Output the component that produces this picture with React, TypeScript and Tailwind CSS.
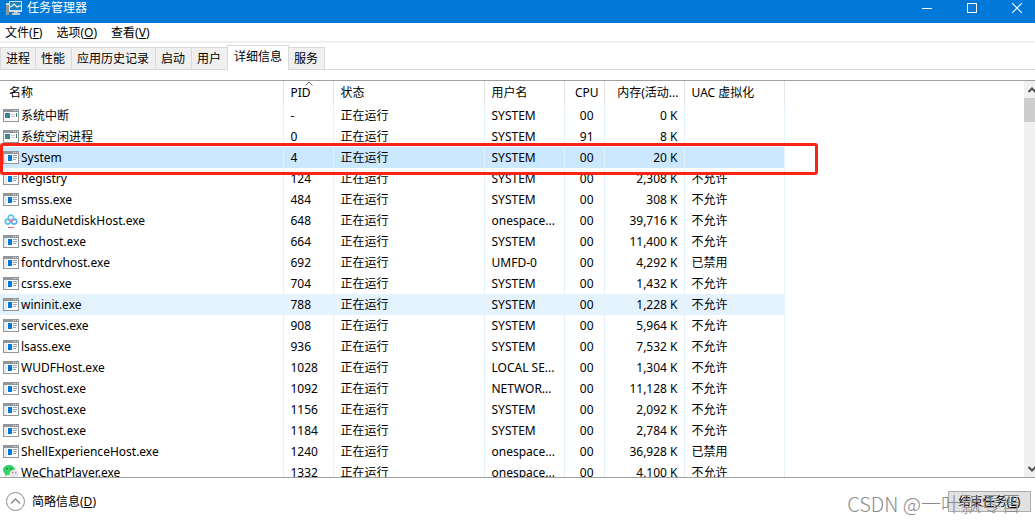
import React, { useState } from 'react';

type IconKind = 'system' | 'exe' | 'baidu' | 'wechat';

interface ProcessRow {
  name: string;
  icon: IconKind;
  pid: string;
  user: string;
  cpu: string;
  memory: string;
  uac: string;
}

const processes: ProcessRow[] = [
  { name: '系统中断', icon: 'system', pid: '-', user: 'SYSTEM', cpu: '00', memory: '0 K', uac: '' },
  { name: '系统空闲进程', icon: 'system', pid: '0', user: 'SYSTEM', cpu: '91', memory: '8 K', uac: '' },
  { name: 'System', icon: 'exe', pid: '4', user: 'SYSTEM', cpu: '00', memory: '20 K', uac: '' },
  { name: 'Registry', icon: 'exe', pid: '124', user: 'SYSTEM', cpu: '00', memory: '2,308 K', uac: '不允许' },
  { name: 'smss.exe', icon: 'exe', pid: '484', user: 'SYSTEM', cpu: '00', memory: '308 K', uac: '不允许' },
  { name: 'BaiduNetdiskHost.exe', icon: 'baidu', pid: '648', user: 'onespace...', cpu: '00', memory: '39,716 K', uac: '不允许' },
  { name: 'svchost.exe', icon: 'exe', pid: '664', user: 'SYSTEM', cpu: '00', memory: '11,400 K', uac: '不允许' },
  { name: 'fontdrvhost.exe', icon: 'exe', pid: '692', user: 'UMFD-0', cpu: '00', memory: '4,292 K', uac: '已禁用' },
  { name: 'csrss.exe', icon: 'exe', pid: '704', user: 'SYSTEM', cpu: '00', memory: '1,432 K', uac: '不允许' },
  { name: 'wininit.exe', icon: 'exe', pid: '788', user: 'SYSTEM', cpu: '00', memory: '1,228 K', uac: '不允许' },
  { name: 'services.exe', icon: 'exe', pid: '908', user: 'SYSTEM', cpu: '00', memory: '5,964 K', uac: '不允许' },
  { name: 'lsass.exe', icon: 'exe', pid: '936', user: 'SYSTEM', cpu: '00', memory: '7,532 K', uac: '不允许' },
  { name: 'WUDFHost.exe', icon: 'exe', pid: '1028', user: 'LOCAL SE...', cpu: '00', memory: '1,304 K', uac: '不允许' },
  { name: 'svchost.exe', icon: 'exe', pid: '1092', user: 'NETWOR...', cpu: '00', memory: '11,128 K', uac: '不允许' },
  { name: 'svchost.exe', icon: 'exe', pid: '1156', user: 'SYSTEM', cpu: '00', memory: '2,092 K', uac: '不允许' },
  { name: 'svchost.exe', icon: 'exe', pid: '1184', user: 'SYSTEM', cpu: '00', memory: '2,784 K', uac: '不允许' },
  { name: 'ShellExperienceHost.exe', icon: 'exe', pid: '1240', user: 'onespace...', cpu: '00', memory: '36,928 K', uac: '已禁用' },
  { name: 'WeChatPlayer.exe', icon: 'wechat', pid: '1332', user: 'onespace...', cpu: '00', memory: '4,100 K', uac: '不允许' },
];

const menus = [
  { label: '文件', hotkey: 'F' },
  { label: '选项', hotkey: 'O' },
  { label: '查看', hotkey: 'V' },
];

const tabs = ['进程', '性能', '应用历史记录', '启动', '用户', '详细信息', '服务'];

const ProcessIcon: React.FC<{ kind: IconKind }> = ({ kind }) => {
  if (kind === 'baidu') {
    return (
      <svg width="16" height="16" viewBox="0 0 16 16" fill="none" className="shrink-0">
        <circle cx="8" cy="4.800" r="2.700" stroke="#5cc4f8" strokeWidth="1.600" />
        <circle cx="4.800" cy="8.600" r="2.500" stroke="#45c6f8" strokeWidth="1.600" />
        <circle cx="11.200" cy="8.600" r="2.500" stroke="#58a9f8" strokeWidth="1.600" />
        <path d="M5.800 6.600 8 8.400l2.200-1.800" stroke="#f2788c" strokeWidth="1.600" />
        <path d="M5 14.500h6" stroke="#ee6576" strokeWidth="1" />
      </svg>
    );
  }
  if (kind === 'wechat') {
    return (
      <svg width="16" height="16" viewBox="0 0 16 16" className="shrink-0">
        <path d="M6 0C2.600 0 0 2.200 0 5c0 1.700.9 3.100 2.300 4L2 11.500l2.400-1.400c.5.1 1 .2 1.600.2 3.300 0 6-2.300 6-5.200S9.300 0 6 0z" fill="#35d267" />
        <circle cx="4" cy="3.600" r=".8" fill="#187a38" />
        <circle cx="8" cy="3.600" r=".8" fill="#187a38" />
        <path d="M11.200 4.800c-2.700 0-4.800 1.800-4.800 4s2.100 4 4.800 4c.5 0 1-.1 1.400-.2l1.900 1-.4-1.700c1.200-.7 1.900-1.800 1.900-3.100 0-2.200-2.100-4-4.800-4z" fill="#e6e6e6" />
        <circle cx="9.700" cy="7.800" r=".7" fill="#888" />
        <circle cx="12.800" cy="7.800" r=".7" fill="#888" />
      </svg>
    );
  }
  return (
    <svg width="16" height="16" viewBox="0 -1 16 16" shapeRendering="crispEdges" className="shrink-0">
      <path d="M0 0h16v13H0z" fill="#90959a" />
      <path d="M1 3h14v9H1z" fill="#fff" />
      <path d="M10 1h1v1h-1zM12 1h1v1h-1zM14 1h1v1h-1z" fill="#dfe2e4" />
      {kind === 'system' ? (
        <>
          <path d="M2 4h5v5H2z" fill="#3b78a8" />
          <path d="M2 7h3v2H2zM4 5h3v2H4z" fill="#3d9270" />
          <path d="M8 5h4v1H8zM8 7h4v1H8z" fill="#c8cdd2" />
          <path d="M13 4h1v4h-1z" fill="#2f8270" />
        </>
      ) : (
        <>
          <path d="M1 3h3v9H1z" fill="#e9ebed" />
          <path d="M5 4h4v6H5z" fill="#0078d7" />
          <path d="M10 4h4v1h-4zM10 6h4v1h-4zM10 8h3v1h-3z" fill="#9aa0a6" />
        </>
      )}
    </svg>
  );
};

const TitleBar: React.FC = () => (
  <header className="flex h-[23px] shrink-0 items-start overflow-hidden bg-[#0078d7] pl-[6px] text-white">
    <svg width="16" height="16" viewBox="0 0 16 16" className="shrink-0">
      <path d="M0 3h3v12H0z" fill="#8f989f" />
      <path d="M0 3h3v2H0z" fill="#d5d9dc" />
      <path d="M3 1h13v11H3z" fill="#d8dde0" />
      <path d="M4 2h11v8H4z" fill="#1683bd" />
      <path d="M4 7l2-1 2-2 3 3 2-1h2" fill="none" stroke="#fff" strokeWidth="1.200" />
      <path d="M8 12h4v1h2v2H6v-2h2z" fill="#c3cace" />
    </svg>
    <h1 className="ml-[5px] flex-1 text-xs leading-4">任务管理器</h1>
    <div className="-mr-1 flex">
      <button aria-label="最小化" className="flex h-[15px] w-[45px] items-center justify-center">
        <svg width="10" height="10" viewBox="0 0 10 10" shapeRendering="crispEdges">
          <path d="M0 5h10v1H0z" fill="#fff" />
        </svg>
      </button>
      <button aria-label="最大化" className="flex h-[15px] w-[45px] items-center justify-center">
        <svg width="10" height="10" viewBox="0 0 10 10" fill="none" stroke="#fff" shapeRendering="crispEdges">
          <path d="M.5.500h9v9h-9z" />
        </svg>
      </button>
      <button aria-label="关闭" className="flex h-[15px] w-[45px] items-center justify-center">
        <svg width="10" height="10" viewBox="0 0 10 10" fill="none" stroke="#fff" strokeWidth="1.200">
          <path d="M0 0l10 10M10 0L0 10" />
        </svg>
      </button>
    </div>
  </header>
);

const ScrollBar: React.FC = () => (
  <div className="flex w-[11px] shrink-0 flex-col overflow-hidden bg-[#f0f0f0]">
    <button aria-label="向上滚动" className="flex h-[17px] w-[17px] items-center pl-[4px]">
      <svg width="8" height="6" viewBox="0 0 8 6" fill="none" stroke="#505050" strokeWidth="2">
        <path d="M.5 5 4 1.500 7.500 5" />
      </svg>
    </button>
    <div className="h-6 bg-[#cdcdcd]" />
    <button aria-label="向下滚动" className="mt-auto flex h-[17px] w-[17px] items-center pl-[4px]">
      <svg width="8" height="6" viewBox="0 0 8 6" fill="none" stroke="#505050" strokeWidth="2">
        <path d="M.5 1 4 4.500 7.500 1" />
      </svg>
    </button>
  </div>
);

const App: React.FC = () => {
  const [activeTab, setActiveTab] = useState('详细信息');
  const [selectedPid, setSelectedPid] = useState('4');
  const hoveredPid = '788';

  return (
    <div className="relative flex h-screen flex-col overflow-hidden bg-white font-['Noto_Sans','Noto_Sans_CJK_SC',sans-serif] text-xs leading-4 text-black">
      <TitleBar />

      {/* Menu */}
      <nav className="flex h-5 shrink-0 items-center gap-[14px] border-b-2 border-[#f0f0f0] pl-[5px] pt-[2px]">
        {menus.map((menu) => (
          <button key={menu.hotkey}>
            {menu.label}(<span className="underline">{menu.hotkey}</span>)
          </button>
        ))}
      </nav>

      {/* Tabs */}
      <div role="tablist" className="flex h-[27px] shrink-0 items-end border-b border-[#d9d9d9]">
        {tabs.map((tab) => (
          <button
            key={tab}
            role="tab"
            aria-selected={tab === activeTab}
            onClick={() => setActiveTab(tab)}
            className={
              tab === activeTab
                ? 'z-10 -mb-px -ml-px h-[25px] border-x border-t border-[#d9d9d9] bg-white px-[6px] pb-[3px]'
                : 'h-[22px] border-r border-t border-[#d9d9d9] bg-[#f0f0f0] pl-[5px] pr-[6px] first:border-l first:pr-[5px]'
            }
          >
            {tab}
          </button>
        ))}
      </div>

      {/* Process list */}
      <main className="relative mt-[10px] flex min-h-0 flex-1 border-y border-[#a0a0a0]">
        <div className="min-w-0 flex-1 overflow-hidden">
          <table className="w-[784px] table-fixed border-collapse whitespace-nowrap">
            <colgroup>
              <col className="w-[283px]" />
              <col className="w-[50px]" />
              <col className="w-[151px]" />
              <col className="w-[80px]" />
              <col className="w-[40px]" />
              <col className="w-[80px]" />
              <col className="w-[100px]" />
            </colgroup>
            <thead>
              <tr className="h-6 text-left *:border-r *:border-[#e5e5e5] *:p-0 *:font-normal">
                <th><span className="pl-[9px]">名称</span></th>
                <th className="relative">
                  <svg width="8" height="5" viewBox="0 0 8 5" fill="none" stroke="#666" className="absolute left-[21px] top-0">
                    <path d="M.5 4.500 4 1l3.500 3.500" />
                  </svg>
                  <span className="pl-[7px]">PID</span>
                </th>
                <th><span className="pl-[7px]">状态</span></th>
                <th><span className="pl-[7px]">用户名</span></th>
                <th className="text-right"><span className="pr-[5px]">CPU</span></th>
                <th className="text-right"><span className="pr-[5px]">内存(活动...</span></th>
                <th><span className="pl-[7px]">UAC 虚拟化</span></th>
              </tr>
            </thead>
            <tbody>
              {processes.map((row) => (
                <tr
                  key={row.pid}
                  onClick={() => setSelectedPid(row.pid)}
                  className={`h-[21px] *:border-r *:border-[#e5f1fb] *:p-0 ${
                    row.pid === selectedPid ? 'bg-[#cce8ff]' : row.pid === hoveredPid ? 'bg-[#e5f3ff]' : ''
                  }`}
                >
                  <td>
                    <div className="flex items-center gap-[2px] pl-[3px]">
                      <ProcessIcon kind={row.icon} />
                      {row.name}
                    </div>
                  </td>
                  <td><span className="pl-[7px]">{row.pid}</span></td>
                  <td><span className="pl-[7px]">正在运行</span></td>
                  <td><span className="pl-[7px]">{row.user}</span></td>
                  <td className="text-right"><span className="pr-[10px]">{row.cpu}</span></td>
                  <td className="text-right"><span className="pr-[6px]">{row.memory}</span></td>
                  <td><span className="pl-[7px]">{row.uac}</span></td>
                </tr>
              ))}
            </tbody>
          </table>
        </div>
        <ScrollBar />

        {/* Annotation around the selected process */}
        <div className="pointer-events-none absolute left-0 top-[62px] h-8 w-[818px] rounded-[3px] border-3 border-[#fb2216]" />
      </main>

      {/* Footer */}
      <footer className="flex h-[45px] shrink-0 items-center justify-between pl-[6px] pr-1 pt-[2px]">
        <button className="flex items-center gap-[7px]">
          <svg width="19" height="19" viewBox="0 0 19 19" fill="none" stroke="#8a8a8a">
            <circle cx="9.500" cy="9.500" r="9" />
            <path d="M5 11.500 9.500 7l4.500 4.500" strokeWidth="1.500" />
          </svg>
          <span>简略信息(<span className="underline">D</span>)</span>
        </button>
        <button className="h-[21px] w-[83px] border border-[#adadad] bg-[#e1e1e1]">
          结束任务(<span className="underline">E</span>)
        </button>
      </footer>

      {/* Watermark */}
      <div className="pointer-events-none absolute bottom-[5px] right-[14px] font-['Noto_Sans_CJK_SC',sans-serif] text-[20px] font-light leading-7 text-[#8c8c8c]">
        CSDN @一叶飘零晋
      </div>
    </div>
  );
};

export default App;
